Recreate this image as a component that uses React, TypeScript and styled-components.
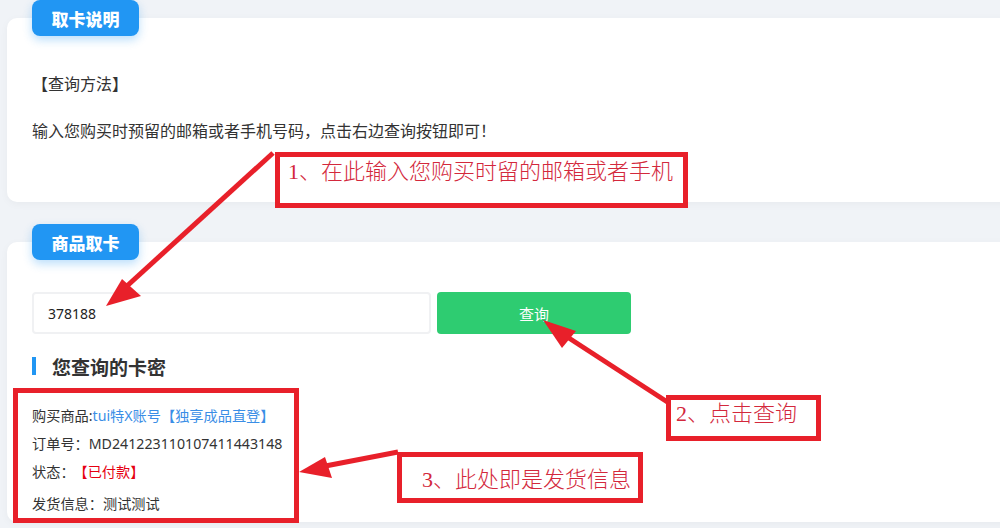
import styled, { createGlobalStyle } from "styled-components";

const GlobalStyle = createGlobalStyle`
  body {
    margin: 0;
    background: #f0f3f7;
    font-family: "Noto Sans", "Noto Sans CJK SC", sans-serif;
    color: #333;
    overflow: hidden;
  }
`;

export default function App() {
  return (
    <>
      <GlobalStyle />
      <Page>
        <Section>
          <Badge>取卡说明</Badge>
          <Card $top={53} $bottom={60}>
            <Paragraph>【查询方法】</Paragraph>
            <Paragraph>输入您购买时预留的邮箱或者手机号码，点击右边查询按钮即可！</Paragraph>
          </Card>
        </Section>

        <Section $gap={22}>
          <Badge>商品取卡</Badge>
          <Card $top={50} $bottom={4}>
            <SearchRow>
              <SearchInput defaultValue="378188" />
              <SearchButton>查询</SearchButton>
            </SearchRow>
            <ResultTitle>您查询的卡密</ResultTitle>
            <InfoList>
              <InfoLine>
                购买商品:<Link>tui特X账号【独享成品直登】</Link>
              </InfoLine>
              <InfoLine>订单号：MD241223110107411443148</InfoLine>
              <InfoLine>
                状态：<Paid>【已付款】</Paid>
              </InfoLine>
              <InfoLine $extra={4}>发货信息：测试测试</InfoLine>
            </InfoList>
          </Card>
        </Section>

        <Overlay>
          <Marks width="1000" height="528">
            <rect x="15.5" y="390.5" width="281" height="130" />
            <line x1="273" y1="153" x2="116" y2="296" />
            <polygon points="106,306 122,279 141,296" />
            <line x1="672" y1="405" x2="555" y2="329" />
            <polygon points="543,320 576,331 562,348" />
            <line x1="398" y1="452" x2="315" y2="468" />
            <polygon points="299,472 325,457 332,478" />
          </Marks>
          <Callout $x={275} $y={152} $w={413} $h={56} $padX={8} $padY={3}>
            1、在此输入您购买时留的邮箱或者手机
          </Callout>
          <Callout $x={666} $y={395} $w={155} $h={46} $padX={5} $padY={2}>
            2、点击查询
          </Callout>
          <Callout $x={397} $y={452} $w={246} $h={51} $padX={20} $padY={11}>
            3、此处即是发货信息
          </Callout>
        </Overlay>
      </Page>
    </>
  );
}

const Page = styled.div`
  position: relative;
  width: 1000px;
  height: 528px;
  padding-left: 7px;
  box-sizing: border-box;
  overflow: hidden;
`;

const Section = styled.section<{ $gap?: number }>`
  margin-top: ${(p) => p.$gap ?? 0}px;
  margin-right: -20px;
`;

const Badge = styled.div`
  position: relative;
  z-index: 1;
  width: 107px;
  height: 36px;
  margin: 0 0 -18px 25px;
  border-radius: 8px;
  background: #2196f3;
  box-shadow: 0 4px 10px rgba(33, 150, 243, 0.3);
  color: #fff;
  font-family: "Noto Sans CJK SC", sans-serif;
  font-size: 17px;
  font-weight: 800;
  display: flex;
  align-items: center;
  justify-content: center;
`;

const Card = styled.div<{ $top: number; $bottom: number }>`
  background: #fff;
  border-radius: 10px;
  box-shadow: 0 2px 8px rgba(0, 0, 0, 0.04);
  padding: ${(p) => p.$top}px 25px ${(p) => p.$bottom}px;
`;

const Paragraph = styled.p`
  margin: 0;
  font-size: 16px;
  line-height: 24px;
  font-family: "Noto Sans CJK SC", sans-serif;

  & + & {
    margin-top: 23px;
  }
`;

const SearchRow = styled.div`
  display: flex;
  gap: 6px;
`;

const SearchInput = styled.input`
  width: 399px;
  height: 42px;
  box-sizing: border-box;
  border: 2px solid #f0f1f3;
  border-radius: 4px;
  padding: 0 14px;
  font-family: "Noto Sans", sans-serif;
  font-size: 14px;
  color: #222;
  outline: none;
`;

const SearchButton = styled.button`
  width: 194px;
  height: 42px;
  border: none;
  border-radius: 4px;
  background: #2ecc71;
  color: #fff;
  font-family: "Noto Sans CJK SC", sans-serif;
  font-size: 15px;
`;

const ResultTitle = styled.h3`
  margin: 20px 0 0;
  height: 24px;
  display: flex;
  align-items: center;
  gap: 16px;
  font-family: "Noto Sans CJK SC", sans-serif;
  font-size: 19px;
  font-weight: 700;
  color: #333;

  &::before {
    content: "";
    width: 4px;
    height: 18px;
    background: #2196f3;
  }
`;

const InfoList = styled.div`
  margin-top: 24px;
  display: flex;
  flex-direction: column;
`;

const InfoLine = styled.div<{ $extra?: number }>`
  font-size: 14.2px;
  line-height: 28px;
  margin-top: ${(p) => p.$extra ?? 0}px;
  color: #333;
`;

const Link = styled.span`
  color: #3a8ee6;
`;

const Paid = styled.span`
  margin-left: 6px;
  color: #e60012;
`;

const Overlay = styled.div`
  position: absolute;
  inset: 0;
  pointer-events: none;
`;

const Marks = styled.svg`
  position: absolute;
  left: 0;
  top: 0;

  rect,
  line {
    fill: none;
    stroke: #e8202a;
    stroke-width: 5;
  }

  polygon {
    fill: #e8202a;
  }
`;

const Callout = styled.div<{
  $x: number;
  $y: number;
  $w: number;
  $h: number;
  $padX: number;
  $padY: number;
}>`
  position: absolute;
  left: ${(p) => p.$x}px;
  top: ${(p) => p.$y}px;
  width: ${(p) => p.$w}px;
  height: ${(p) => p.$h}px;
  box-sizing: border-box;
  border: 5px solid #e8202a;
  padding: ${(p) => p.$padY}px 0 0 ${(p) => p.$padX}px;
  background: #fff;
  color: #d3283c;
  font-family: "Liberation Serif", "Noto Sans CJK SC", serif;
  font-weight: 200;
  font-size: 22px;
  line-height: 24px;
  white-space: nowrap;
`;
